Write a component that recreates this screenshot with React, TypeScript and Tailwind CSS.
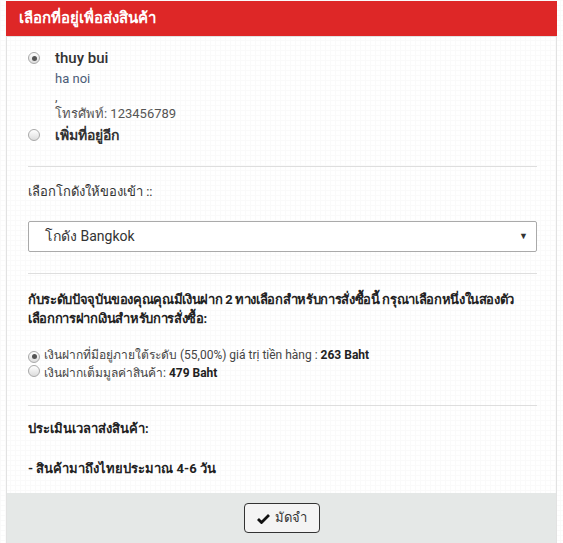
import React from 'react';

/**
 * ราดิโอแบบวาดเอง
 */
function Radio({ checked = false }: { checked?: boolean }): JSX.Element {
  return (
    <span className="inline-flex h-[12px] w-[12px] shrink-0 items-center justify-center rounded-full border border-[#a9a9a9] bg-[linear-gradient(#ffffff,#dcdcdc)]">
      {checked && <span className="h-[5px] w-[5px] rounded-full bg-[#555]" />}
    </span>
  );
}

export default function App(): JSX.Element {
  return (
    <div className="min-h-[543px] w-[563px] bg-white bg-[linear-gradient(#fafafa_1px,transparent_1px),linear-gradient(90deg,#fafafa_1px,transparent_1px)] bg-[size:5px_5px] pt-[1px] font-['Roboto','Noto_Sans','Open_Sans',sans-serif]">
      <div className="ml-[6px] w-[551px]">
        <div className="flex h-[35px] items-center bg-[#de2727] pl-[13px] text-[15px] font-bold text-white">
          เลือกที่อยู่เพื่อส่งสินค้า
        </div>

        <div className="border-x border-t border-[#e2e2e2] pt-[11px] pb-[15px] pl-[21px] pr-[19px]">
          {/* ที่อยู่ */}
          <div className="flex">
            <div className="flex h-[20px] w-[27px] items-center">
              <Radio checked />
            </div>
            <div>
              <div className="text-[15px] leading-[20px] font-medium text-[#333]">thuy bui</div>
              <div className="mt-[1px] text-[13px] leading-[20px] text-[#4b5c78]">ha noi</div>
              <div className="text-[13px] leading-[16px] text-[#555]">,</div>
              <div className="text-[13px] leading-[18px] text-[#555]">โทรศัพท์: 123456789</div>
            </div>
          </div>
          <div className="mt-[2px] flex">
            <div className="flex h-[20px] w-[27px] items-center">
              <Radio />
            </div>
            <div className="text-[14px] leading-[20px] font-bold text-[#333]">เพิ่มที่อยู่อีก</div>
          </div>

          <hr className="mt-[21px] border-[#dedede]" />

          {/* โกดัง */}
          <div className="mt-[16px] text-[13px] leading-[18px] text-[#333]">เลือกโกดังให้ของเข้า ::</div>
          <div className="mt-[20px] flex h-[31px] items-center justify-between rounded-[2px] border border-[#aaa] bg-white pl-[16px] pr-[8px]">
            <span className="text-[14px] text-[#333]">โกดัง Bangkok</span>
            <span className="text-[9px] text-[#333]">▼</span>
          </div>

          <hr className="mt-[21px] border-[#dedede]" />

          {/* เงินฝาก */}
          <p className="mt-[16px] text-[13px] leading-[19px] font-bold tracking-[-0.35px] text-[#222]">
            <span className="whitespace-nowrap">กับระดับปัจจุบันของคุณคุณมีเงินฝาก 2 ทางเลือกสำหรับการสั่งซื้อนี้ กรุณาเลือกหนึ่งในสองตัว</span>
            <br />
            เลือกการฝากเงินสำหรับการสั่งซื้อ:
          </p>
          <div className="mt-[18px] text-[12px] leading-[18px] text-[#444]">
            <div className="flex items-center">
              <span className="w-[16px]"><Radio checked /></span>
              <span>
                เงินฝากที่มีอยู่ภายใต้ระดับ (55,00%) giá trị tiền hàng : <b className="text-[#222]">263 Baht</b>
              </span>
            </div>
            <div className="flex items-center">
              <span className="w-[16px]"><Radio /></span>
              <span>
                เงินฝากเต็มมูลค่าสินค้า: <b className="text-[#222]">479 Baht</b>
              </span>
            </div>
          </div>

          <hr className="mt-[23px] border-[#dedede]" />

          {/* เวลา */}
          <div className="mt-[14px] text-[13px] leading-[18px] font-bold text-[#222]">ประเมินเวลาส่งสินค้า:</div>
          <div className="mt-[22px] text-[13px] leading-[18px] font-bold text-[#222]">- สินค้ามาถึงไทยประมาณ 4-6 วัน</div>
        </div>

        <div className="flex justify-center border-x border-[#e2e2e2] bg-[#e5e8e7] py-[10px]">
          <button className="flex h-[30px] w-[76px] items-center justify-center gap-[5px] rounded-[4px] border border-[#333] bg-[#f4f4f4] text-[13px] text-[#333]">
            <svg width="13" height="11" viewBox="0 0 13 11">
              <path d="M1 6 L4.5 9.5 L12 2" fill="none" stroke="#111" strokeWidth="2.8" />
            </svg>
            มัดจำ
          </button>
        </div>
      </div>
    </div>
  );
}
